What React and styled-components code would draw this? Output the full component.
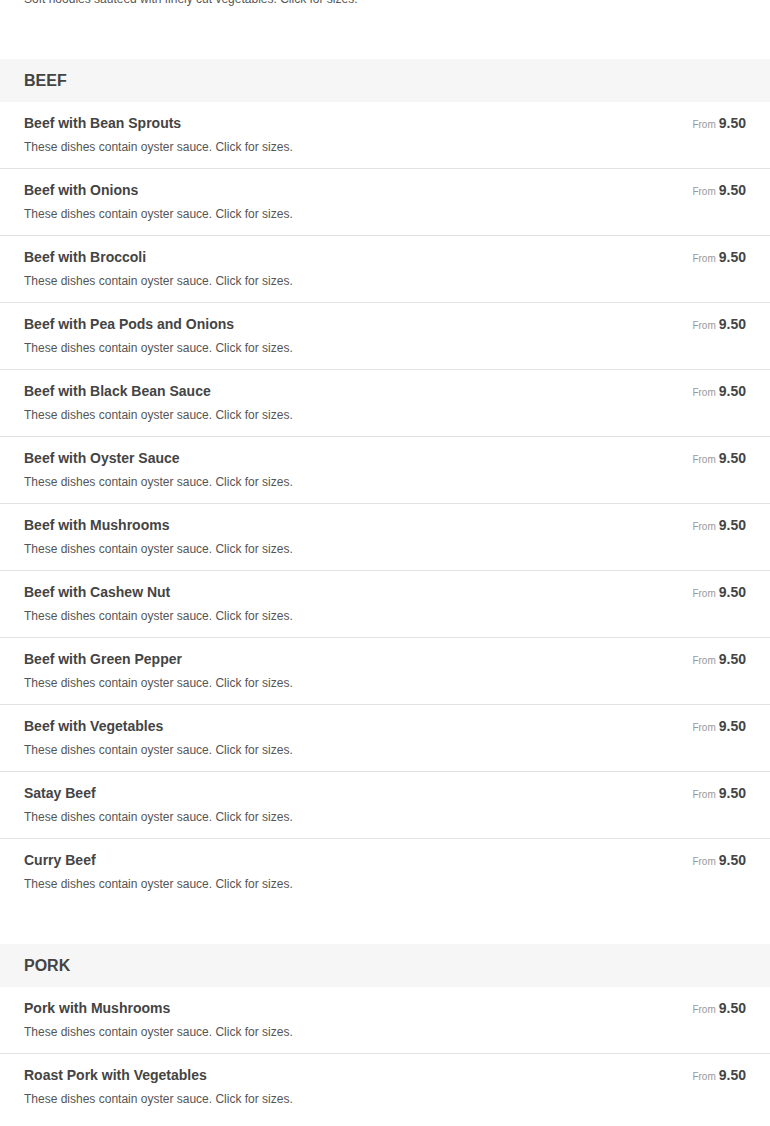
import React from 'react';
import styled, { createGlobalStyle } from 'styled-components';

const GlobalStyle = createGlobalStyle`
	html, body {
		margin: 0;
		padding: 0;
		background: #ffffff;
		font-family: 'Liberation Sans', Arial, sans-serif;
		color: #444444;
	}
`;

// page is shown scrolled a little, the previous dish sits above the fold
const Menu = styled.div`
	width: 770px;
	margin-top: -46px;
`;

const Section = styled.section`
	margin-bottom: 39px;
`;

const SectionHeader = styled.h2`
	margin: 0;
	height: 43px;
	padding: 0 24px;
	display: flex;
	align-items: center;
	background-color: #f6f6f6;
	font-size: 16px;
	font-weight: bold;
	color: #444444;
`;

const Item = styled.div`
	display: flex;
	justify-content: space-between;
	align-items: flex-start;
	padding: 13px 24px 14px 24px;
	border-bottom: 1px solid #e2e2e2;
	cursor: pointer;
	&:last-child {
		border-bottom: none;
	}
`;

const ItemText = styled.div`
	display: flex;
	flex-direction: column;
	gap: 8px;
`;

const ItemName = styled.div`
	font-size: 14px;
	line-height: 17px;
	font-weight: bold;
	color: #444444;
`;

const ItemDesc = styled.div`
	font-size: 12px;
	line-height: 14px;
	color: #555555;
`;

const Price = styled.div`
	display: flex;
	align-items: baseline;
	gap: 3px;
	line-height: 17px;
	white-space: nowrap;
	& small {
		font-size: 10px;
		color: #999999;
	}
	& strong {
		font-size: 14px;
		color: #444444;
	}
`;

const NOTE = 'These dishes contain oyster sauce. Click for sizes.';

const sections = [
	{
		title: null,
		items: [
			{
				name: 'Vegetable Chow Mein',
				desc: 'Soft noodles sauteed with finely cut vegetables. Click for sizes.',
			},
		],
	},
	{
		title: 'BEEF',
		items: [
			'Beef with Bean Sprouts',
			'Beef with Onions',
			'Beef with Broccoli',
			'Beef with Pea Pods and Onions',
			'Beef with Black Bean Sauce',
			'Beef with Oyster Sauce',
			'Beef with Mushrooms',
			'Beef with Cashew Nut',
			'Beef with Green Pepper',
			'Beef with Vegetables',
			'Satay Beef',
			'Curry Beef',
		].map(name => ({ name, desc: NOTE })),
	},
	{
		title: 'PORK',
		items: ['Pork with Mushrooms', 'Roast Pork with Vegetables'].map(name => ({
			name,
			desc: NOTE,
		})),
	},
];

const MenuItem = ({ name, desc, price = '9.50' }) => (
	<Item>
		<ItemText>
			<ItemName>{name}</ItemName>
			<ItemDesc>{desc}</ItemDesc>
		</ItemText>
		<Price>
			<small>From</small>
			<strong>{price}</strong>
		</Price>
	</Item>
);

const App = () => (
	<>
		<GlobalStyle />
		<Menu>
			{sections.map((section, i) => (
				<Section key={i}>
					{section.title && <SectionHeader>{section.title}</SectionHeader>}
					<div>
						{section.items.map(item => (
							<MenuItem key={item.name} {...item} />
						))}
					</div>
				</Section>
			))}
		</Menu>
	</>
);

export default App;
